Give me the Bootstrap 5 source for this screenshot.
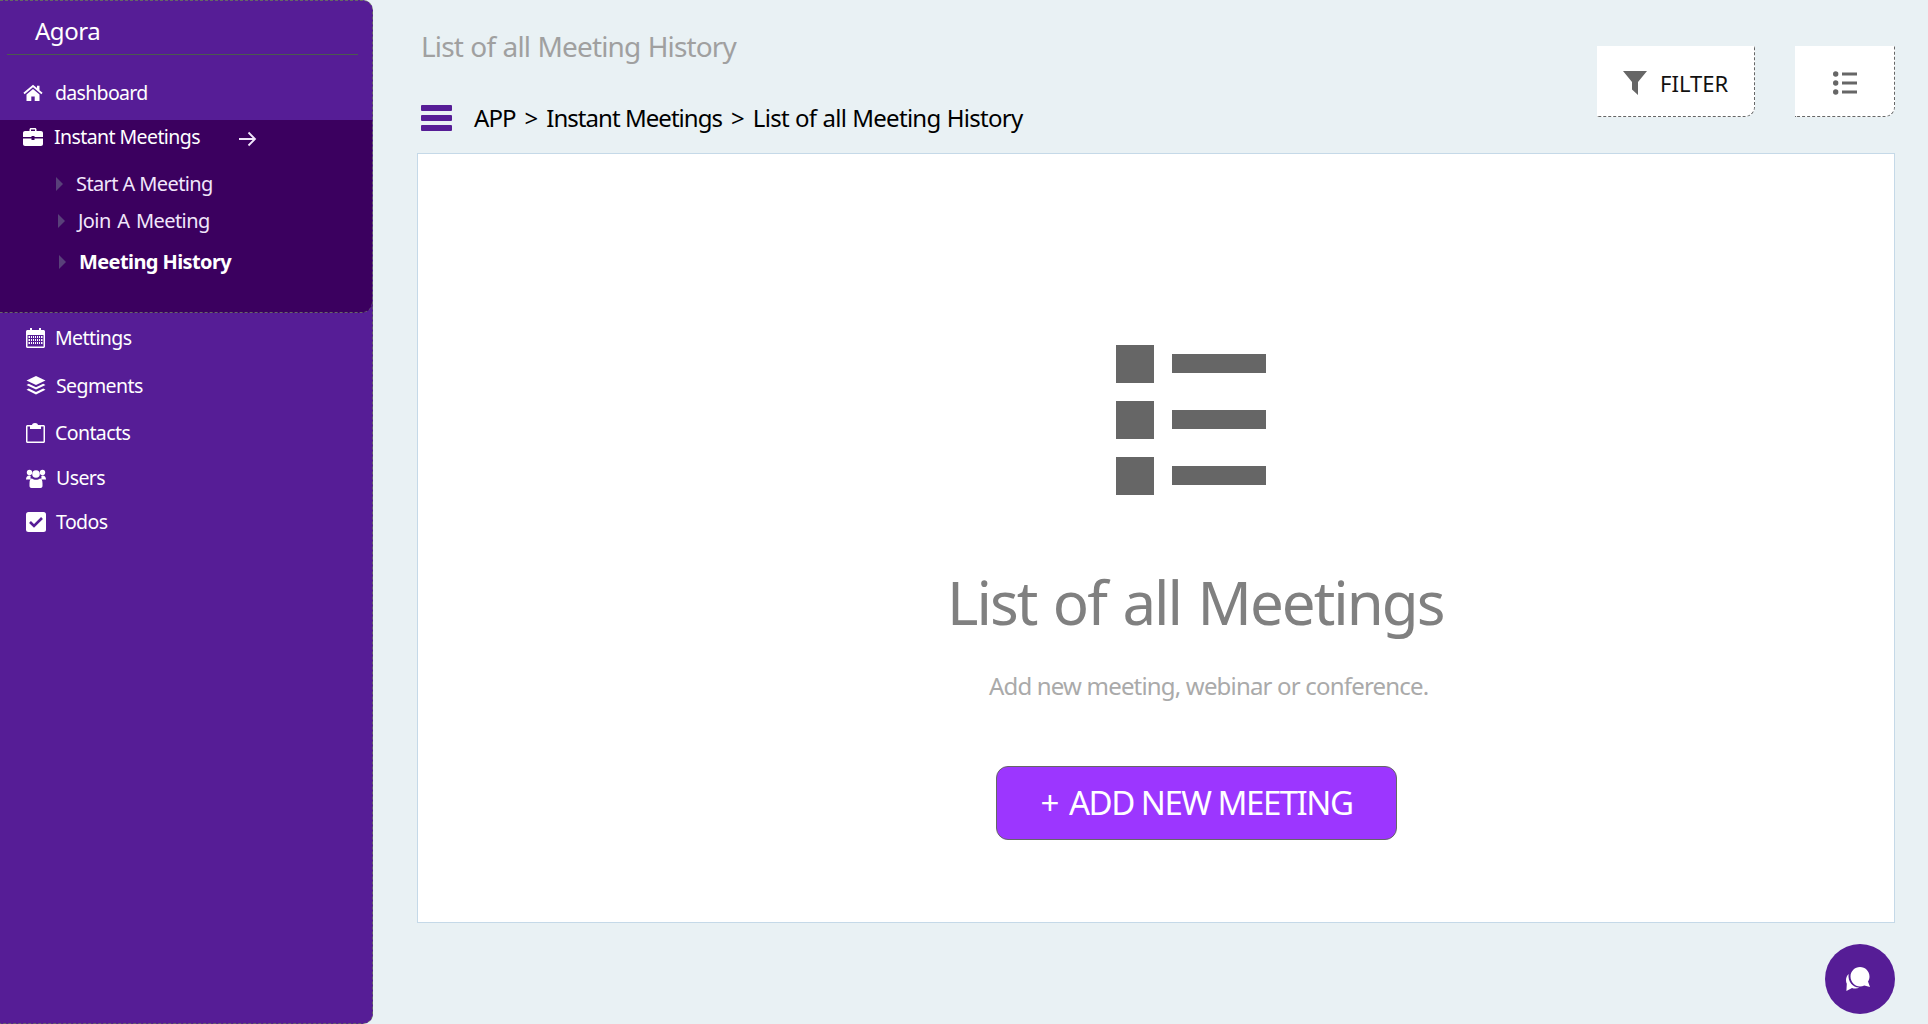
<!DOCTYPE html>
<html lang="en">
<head>
    <meta charset="UTF-8">
    <meta name="viewport" content="width=device-width, initial-scale=1.0">
    <title>Agora - Meeting History</title>
    <link rel="stylesheet" href="https://cdn.jsdelivr.net/npm/bootstrap@5.3.0/dist/css/bootstrap.min.css">
    <style>
        body {
            background-color: #e9f1f4;
            font-family: "Noto Sans", "Open Sans", sans-serif;
            letter-spacing: -0.03em;
            overflow: hidden;
        }
        .app-shell { height: 1024px; }

        /* sidebar */
        .side-bar {
            width: 373px;
            flex: none;
            background: #561d96;
            color: #fff;
            border: 1px dashed #666;
            border-left: 0;
            border-radius: 0 10px 10px 0;
        }
        .brand-row {
            margin: 0 14px 0 7px;
            height: 54px;
            padding: 11px 0 0 28px;
            font-size: 24px;
            line-height: 38px;
            border-bottom: 1px solid #4b5a4f;
        }
        .side-link {
            display: flex;
            align-items: center;
            color: #fff;
            text-decoration: none;
            font-size: 19.5px;
            line-height: 28px;
            letter-spacing: -0.03em;
        }
        .side-link svg { flex: none; fill: #fff; }
        .link-home { padding: 10px 0 0 23px; height: 65px; letter-spacing: -0.035em; }
        .link-home svg { margin-right: 12px; }
        .open-group {
            height: 193px;
            background: #3b005f;
            border-bottom: 1px dashed #666;
            border-radius: 0 0 10px 0;
        }
        .link-open { padding: 3px 0 0 23px; }
        .link-open svg { margin-right: 11px; }
        .link-open .go-arrow { margin: 4px 0 0 38px; }
        .sub-link { color: #f1e6fb; font-size: 20px; letter-spacing: -0.03em; }
        .sub-link svg { fill: #59407a; margin-right: 13px; }
        .sub-start { padding: 19px 0 0 56px; }
        .sub-join { padding: 9px 0 0 58px; word-spacing: 2px; }
        .sub-history { padding: 13px 0 0 59px; font-weight: 700; color: #fff; }
        .plain-links { padding: 11px 0 0 26px; }
        .plain-links svg { margin-right: 10px; }
        .plain-links .side-link { height: 28px; }
        .gap-segments { margin-top: 20px; }
        .gap-contacts { margin-top: 19px; }
        .gap-users { margin-top: 17px; }
        .gap-todos { margin-top: 16px; }

        /* main */
        .main-area { padding: 0 33px 0 44px; min-width: 0; }
        .page-title {
            margin: 0;
            padding: 27px 0 0 4px;
            font-size: 28px;
            font-weight: 400;
            line-height: 38px;
            color: #a0a0a0;
            letter-spacing: -0.031em;
            word-spacing: 1px;
        }
        .crumb-row { padding: 37px 0 0 4px; font-size: 24px; line-height: 32px; color: #000; letter-spacing: -0.04em; }
        .crumb-row svg { margin-right: 22px; flex: none; }
        .crumb-sep { margin: 0 9px; }
        .crumb-last { letter-spacing: -0.03em; word-spacing: 0.6px; }
        .tool-btn {
            height: 71px;
            margin-top: 46px;
            padding-top: 10px;
            background: #fff;
            border: 0;
            border-right: 1px dashed #666;
            border-bottom: 1px dashed #666;
            border-radius: 0 0 10px 0;
            color: #111;
            font-size: 22px;
        }
        .tool-filter { width: 158px; padding-left: 26px; gap: 13px; }
        .tool-list { width: 100px; margin-left: 40px; }
        .empty-panel {
            height: 770px;
            margin-top: 19px;
            background: #fff;
            border: 1px solid #c5d9e8;
        }
        .empty-icon { margin: 191px 0 0 698px; display: block; }
        .empty-title {
            margin: 0 0 0 529px;
            padding-top: 67px;
            font-size: 60px;
            font-weight: 400;
            line-height: 80px;
            color: #808080;
            letter-spacing: -0.0335em;
            word-spacing: 3px;
        }
        .empty-sub {
            margin: 0 0 0 571px;
            padding-top: 28px;
            font-size: 24px;
            line-height: 32px;
            color: #aaa;
            letter-spacing: -0.034em;
        }
        .add-btn {
            width: 401px;
            height: 74px;
            margin: 64px 0 0 578px;
            padding-top: 6px;
            background: #9c36ff;
            border: 1px solid #666;
            border-radius: 12px;
            color: #fff;
            font-size: 33px;
            line-height: 40px;
            letter-spacing: -0.045em;
        }
        .add-btn:hover { background: #8f2bf0; color: #fff; border-color: #666; }
        .plus-mark { margin-right: 11px; }
        .chat-fab {
            position: fixed;
            right: 33px;
            bottom: 10px;
            width: 70px;
            height: 70px;
            padding-right: 4px !important;
            background: #561d96;
        }
    </style>
</head>
<body>
<div class="app-shell d-flex">

    <aside class="side-bar">
        <div class="brand-row">Agora</div>

        <a class="side-link link-home" href="#">
            <svg width="20" height="18" viewBox="0 0 20 18"><path d="M10 .8.4 8.8l1.2 1.400L10 3.200l8.400 7 1.200-1.400L16.500 6.200V1.800H14v2.300z"/><path d="M10 5 3.500 10.400V17H8.300v-4.500h3.400V17h4.800v-6.600z"/></svg>
            dashboard
        </a>

        <div class="open-group">
            <a class="side-link link-open" href="#">
                <svg width="20" height="18" viewBox="0 0 20 18"><path d="M6.500 3V1.500C6.500.7 7.200 0 8 0h4c.8 0 1.500.7 1.500 1.500V3H18c1.100 0 2 .9 2 2v4H11.500V8h-3v1H0V5c0-1.100.9-2 2-2zm1.500 0h4V1.500H8z"/><path d="M0 10.500h8.500V12h3v-1.500H20V16c0 1.100-.9 2-2 2H2c-1.100 0-2-.9-2-2z"/></svg>
                Instant Meetings
                <svg class="go-arrow" width="19" height="16" viewBox="0 0 19 16"><path d="M1 8h16M10.500 1.500 17 8l-6.500 6.500" fill="none" stroke="#f1e6fb" stroke-width="1.800"/></svg>
            </a>
            <a class="side-link sub-link sub-start" href="#">
                <svg width="7" height="14" viewBox="0 0 7 14"><path d="M0 0 7 7 0 14z"/></svg>
                Start A Meeting
            </a>
            <a class="side-link sub-link sub-join" href="#">
                <svg width="7" height="14" viewBox="0 0 7 14"><path d="M0 0 7 7 0 14z"/></svg>
                Join A Meeting
            </a>
            <a class="side-link sub-link sub-history" href="#">
                <svg width="7" height="14" viewBox="0 0 7 14"><path d="M0 0 7 7 0 14z"/></svg>
                Meeting History
            </a>
        </div>

        <nav class="plain-links">
            <a class="side-link" href="#">
                <svg width="19" height="20" viewBox="0 0 19 20"><path fill-rule="evenodd" d="M4 0h2v2h7V0h2v2h2.500C18.300 2 19 2.700 19 3.500v15c0 .8-.7 1.500-1.500 1.500h-16C.7 20 0 19.300 0 18.500v-15C0 2.700.7 2 1.500 2H4zM1.500 7v11.500h16V7zM5 8h1v2H5zm4 0h1v2H9zm4 0h1v2h-1zM2.500 8H4v2H2.500zm0 3H4v2H2.500zM5 11h1v2H5zm4 0h1v2H9zm4 0h1v2h-1zM2.500 14H4v2H2.500zM5 14h1v2H5zm4 0h1v2H9zm4 0h1v2h-1zm2-6h1.500v2H15zm0 3h1.500v2H15zm0 3h1.500v2H15zM7 8h1v2H7zm0 3h1v2H7zm0 3h1v2H7zm4-6h1v2h-1zm0 3h1v2h-1zm0 3h1v2h-1z"/></svg>
                Mettings
            </a>
            <a class="side-link gap-segments" href="#">
                <svg width="20" height="20" viewBox="0 0 20 20"><path d="M10 0l9.500 4.500L10 9 .5 4.500z"/><path d="M2.800 7.800 10 11.200l7.200-3.400 2.300 1.100L10 13.500.5 8.900z"/><path d="M2.800 12.600 10 16l7.200-3.400 2.300 1.100L10 18.500.5 13.700z"/></svg>
                Segments
            </a>
            <a class="side-link gap-contacts" href="#">
                <svg width="19" height="20" viewBox="0 0 19 20"><path fill-rule="evenodd" d="M1.500 2H6C6.200.8 7.200 0 9 0s2.800.8 3 2h5.500C18.300 2 19 2.700 19 3.500v15c0 .8-.7 1.500-1.500 1.500h-16C.7 20 0 19.300 0 18.500v-15C0 2.700.7 2 1.500 2zm0 1.500v15h16v-15H15V6H4V3.500z"/></svg>
                Contacts
            </a>
            <a class="side-link gap-users" href="#">
                <svg width="20" height="19" viewBox="0 0 20 19"><circle cx="3.500" cy="3.500" r="2.700"/><circle cx="16.500" cy="3.500" r="2.700"/><circle cx="10" cy="5" r="3.800"/><path d="M0 11c0-3 1-4.500 3.500-4.500.6 0 1 .2 1.300.5-.5 1.100-.3 2.500.4 3.500H1C.5 10.500 0 10.500 0 11z"/><path d="M20 11c0-3-1-4.500-3.500-4.500-.6 0-1 .2-1.300.5.500 1.100.3 2.500-.4 3.500H19c.5 0 1 0 1 .5z"/><path d="M6 9.500c1 1 2.500 1.300 4 1.300s3-.3 4-1.300c1.500 0 2.500 1.500 2.500 5V17c0 1-.8 2-2 2h-9c-1.200 0-2-1-2-2v-2.500c0-3.500 1-5 2.500-5z"/></svg>
                Users
            </a>
            <a class="side-link gap-todos" href="#">
                <svg width="20" height="20" viewBox="0 0 20 20"><rect width="20" height="20" rx="2.500"/><path d="M4 10l4 4 8-8" fill="none" stroke="#561d96" stroke-width="2.600"/></svg>
                Todos
            </a>
        </nav>
    </aside>

    <main class="main-area flex-grow-1">
        <div class="d-flex justify-content-between">
            <div>
                <h1 class="page-title">List of all Meeting History</h1>
                <div class="crumb-row d-flex align-items-center">
                    <svg width="31" height="26" viewBox="0 0 31 26" fill="#561d96"><rect width="31" height="6" rx="1"/><rect y="10" width="31" height="6" rx="1"/><rect y="20" width="31" height="6" rx="1"/></svg>
                    <div>APP<span class="crumb-sep">&gt;</span>Instant Meetings<span class="crumb-sep">&gt;</span><span class="crumb-last">List of all Meeting History</span></div>
                </div>
            </div>
            <div class="d-flex">
                <button class="btn tool-btn tool-filter d-flex align-items-center" type="button">
                    <svg width="24" height="24" viewBox="0 0 24 24" fill="#666"><path d="M0 0h24L15 11v13l-6-5.500V11z"/></svg>
                    FILTER
                </button>
                <button class="btn tool-btn tool-list d-flex align-items-center justify-content-center" type="button">
                    <svg width="24" height="24" viewBox="0 0 24 24" fill="#666"><circle cx="2.700" cy="3" r="2.700"/><circle cx="2.700" cy="12" r="2.700"/><circle cx="2.700" cy="21" r="2.700"/><rect x="9" y="1.500" width="15" height="3"/><rect x="9" y="10.500" width="15" height="3"/><rect x="9" y="19.500" width="15" height="3"/></svg>
                </button>
            </div>
        </div>

        <section class="empty-panel">
            <svg class="empty-icon" width="150" height="150" viewBox="0 0 150 150" fill="#666"><rect width="38" height="38"/><rect y="56" width="38" height="38"/><rect y="112" width="38" height="38"/><rect x="56" y="9" width="94" height="19"/><rect x="56" y="65" width="94" height="19"/><rect x="56" y="121" width="94" height="19"/></svg>
            <h2 class="empty-title">List of all Meetings</h2>
            <p class="empty-sub mb-0">Add new meeting, webinar or conference.</p>
            <a class="btn add-btn d-flex align-items-center justify-content-center" href="#"><span class="plus-mark">+</span>ADD NEW MEETING</a>
        </section>
    </main>
</div>

<button class="btn rounded-circle chat-fab d-flex align-items-center justify-content-center p-0" type="button" aria-label="Chat">
    <svg width="24" height="24" viewBox="0 0 24 24" fill="#fff"><path d="M14 0c5.200 0 9.500 4.200 9.500 9.500 0 2-.6 3.700-1.500 5.100l2 5.400-5.700-1.600c-1.300.7-2.800 1.100-4.300 1.100-5.300 0-9.500-4.600-9.500-10C4.500 4.200 8.800 0 14 0z"/><path d="M2.600 7C1 8.600 0 10.800 0 13.200c0 1.300.3 2.500.8 3.600L.4 24l5.600-3c1 .4 2.200.6 3.400.6 1.400 0 2.800-.3 3.900-1C7.600 21 1.500 15 2.600 7z"/></svg>
</button>

<script src="https://cdn.jsdelivr.net/npm/bootstrap@5.3.0/dist/js/bootstrap.bundle.min.js"></script>
</body>
</html>
